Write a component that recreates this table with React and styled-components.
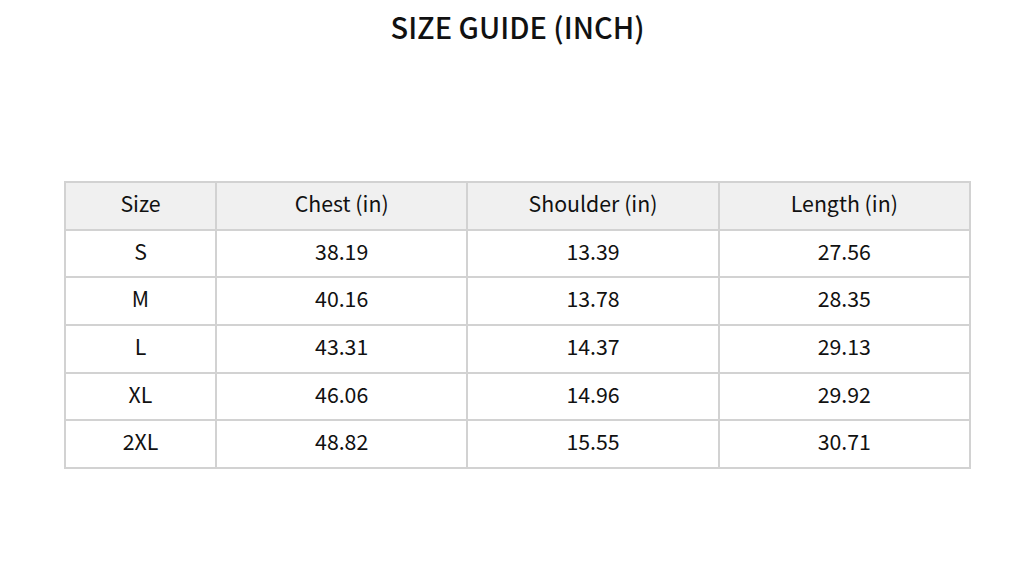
import React from "react";
import styled, { createGlobalStyle } from "styled-components";

const rows = [
  ["S", "38.19", "13.39", "27.56"],
  ["M", "40.16", "13.78", "28.35"],
  ["L", "43.31", "14.37", "29.13"],
  ["XL", "46.06", "14.96", "29.92"],
  ["2XL", "48.82", "15.55", "30.71"],
];

export default function App() {
  return (
    <>
      <GlobalStyle />
      <Page>
        <Title>SIZE GUIDE (INCH)</Title>
        <Table>
          <colgroup>
            <col style={{ width: "151px" }} />
            <col />
            <col />
            <col />
          </colgroup>
          <thead>
            <tr>
              <Th>Size</Th>
              <Th>Chest (in)</Th>
              <Th>Shoulder (in)</Th>
              <Th>Length (in)</Th>
            </tr>
          </thead>
          <tbody>
            {rows.map((r) => (
              <tr key={r[0]}>
                {r.map((c, i) => (
                  <Td key={i}>{c}</Td>
                ))}
              </tr>
            ))}
          </tbody>
        </Table>
      </Page>
    </>
  );
}

const GlobalStyle = createGlobalStyle`
  body {
    margin: 0;
    background: #fff;
    font-family: "Noto Sans CJK SC", "Noto Sans", sans-serif;
    color: #111;
  }
`;

const Page = styled.div`
  width: 1035px;
  height: 585px;
  display: flex;
  flex-direction: column;
  align-items: center;
`;

const Title = styled.h1`
  margin: 7px 0 0;
  font-size: 29px;
  font-weight: 500;
  line-height: 38px;
  color: #111;
`;

const Table = styled.table`
  margin-top: 136px;
  width: 907px;
  border-collapse: collapse;
  table-layout: fixed;
`;

const Th = styled.th`
  height: 39.7px;
  padding: 0 0 6px;
  background: #f0f0f0;
  border: 2px solid #d2d2d2;
  font-size: 21.3px;
  font-weight: 400;
  line-height: 22px;
  text-align: center;
`;

const Td = styled.td`
  height: 39.7px;
  padding: 0 0 6px;
  border: 2px solid #d2d2d2;
  font-size: 21.3px;
  line-height: 22px;
  text-align: center;
`;
